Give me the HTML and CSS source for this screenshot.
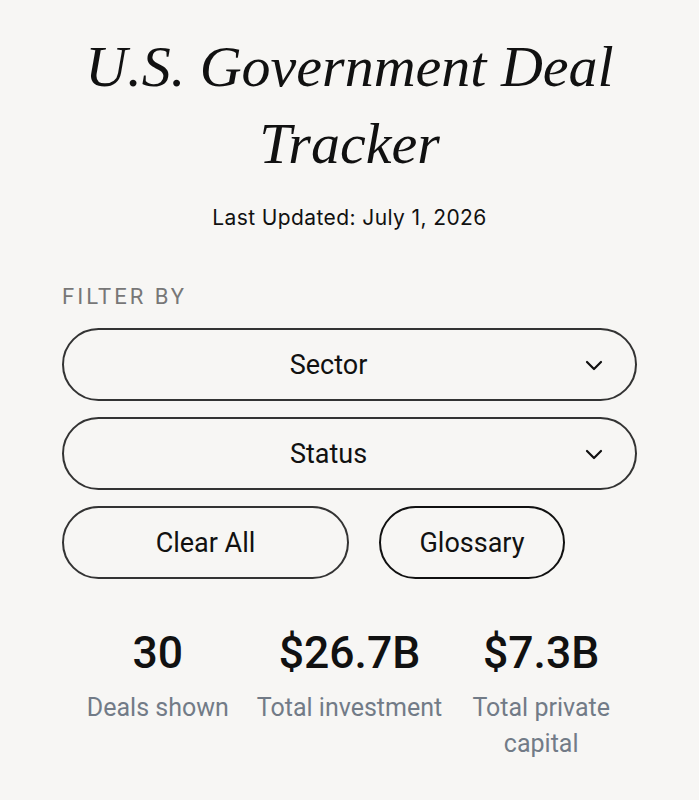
FILE: index.html
```html
<!DOCTYPE html>
<html lang="en">
<head>
  <meta charset="UTF-8">
  <title>U.S. Government Deal Tracker</title>
  <link rel="stylesheet" href="styles.css">
</head>
<body>

<div class="page">
  <h1>U.S. Government Deal Tracker</h1>
  <p class="updated">Last Updated: July 1, 2026</p>

  <div class="filters">
    <div class="filter-label">FILTER BY</div>

    <button class="select" id="sector">
      <span>Sector</span>
      <svg class="chevron" width="18" height="12" viewBox="0 0 18 12">
        <path d="M2 3 L9 10 L16 3" fill="none" stroke="#111" stroke-width="2.2" stroke-linecap="round" stroke-linejoin="round"/>
      </svg>
    </button>

    <button class="select" id="status">
      <span>Status</span>
      <svg class="chevron" width="18" height="12" viewBox="0 0 18 12">
        <path d="M2 3 L9 10 L16 3" fill="none" stroke="#111" stroke-width="2.2" stroke-linecap="round" stroke-linejoin="round"/>
      </svg>
    </button>

    <div class="actions">
      <button class="pill clear">Clear All</button>
      <button class="pill glossary">Glossary</button>
    </div>
  </div>

  <div class="stats">
    <div class="stat">
      <div class="value">30</div>
      <div class="label">Deals shown</div>
    </div>
    <div class="stat">
      <div class="value">$26.7B</div>
      <div class="label">Total investment</div>
    </div>
    <div class="stat">
      <div class="value">$7.3B</div>
      <div class="label">Total private capital</div>
    </div>
  </div>
</div>

</body>
</html>
```

FILE: styles.css
```css
body {
  margin: 0;
  background-color: #f7f6f4;
  color: #111;
  font-family: Roboto, "Liberation Sans", sans-serif;
}

.page {
  padding: 28px 62px 40px;
}

h1 {
  font-family: "Liberation Serif", serif;
  font-style: italic;
  font-weight: normal;
  font-size: 58px;
  line-height: 77px;
  text-align: center;
  margin: 0;
}

.updated {
  font-family: Inter, "Noto Sans", sans-serif;
  font-size: 21px;
  letter-spacing: 0.4px;
  text-align: center;
  margin: 23px 0 0;
}

.filters {
  margin-top: 54px;
}

.filter-label {
  font-size: 22px;
  letter-spacing: 3px;
  color: #777;
  margin-bottom: 19px;
}

.select {
  display: flex;
  align-items: center;
  width: 100%;
  height: 73px;
  margin-bottom: 16px;
  padding: 0 32px 0 24px;
  border: 2px solid #333;
  border-radius: 40px;
  background: transparent;
  font-family: inherit;
  font-size: 27px;
  color: #111;
  cursor: pointer;
}

.select span {
  flex: 1;
  text-align: center;
}

.chevron {
  margin-left: 16px;
}

.actions {
  display: flex;
  gap: 30px;
}

.pill {
  height: 73px;
  border: 2px solid #333;
  border-radius: 40px;
  background: transparent;
  font-family: inherit;
  font-size: 27px;
  color: #111;
  cursor: pointer;
}

.clear {
  width: 287px;
}

.glossary {
  width: 186px;
  border-color: #111;
}

.stats {
  display: grid;
  grid-template-columns: repeat(3, 1fr);
  margin-top: 47px;
  text-align: center;
}

.value {
  font-size: 44.5px;
  font-weight: 500;
  line-height: 54px;
}

.label {
  margin-top: 10px;
  font-size: 25px;
  line-height: 36px;
  color: #727b87;
}
```
